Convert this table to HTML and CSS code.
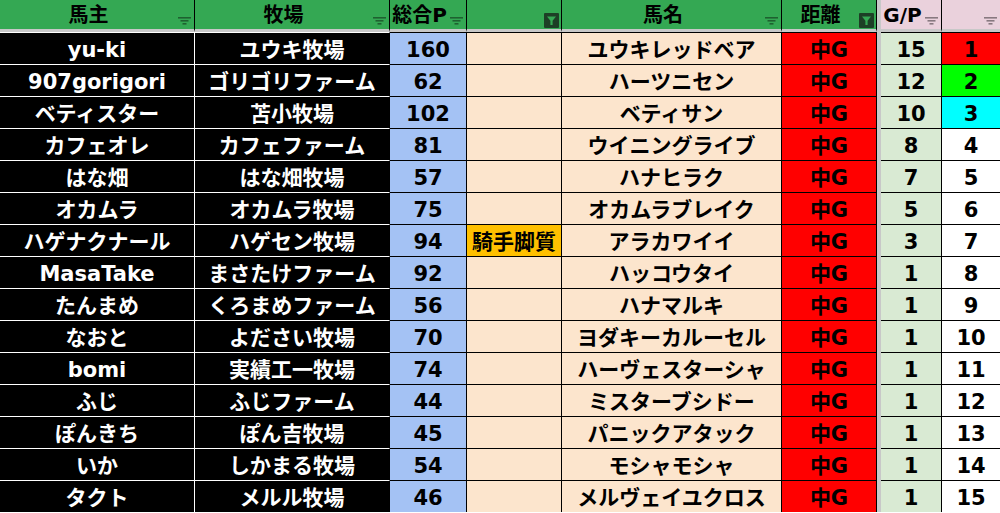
FILE: index.html
```html
<!DOCTYPE html>
<html lang="ja">
<head>
<meta charset="utf-8">
<title>馬主一覧</title>
<link rel="stylesheet" href="styles.css">
</head>
<body>
<div class="sheet">
  <div class="h"><span class="ht">馬主</span><span class="fb"><svg class="fi" width="13" height="8" viewBox="0 0 13 8"><rect x="0" y="0" width="13" height="1.6"/><rect x="2.5" y="3" width="8" height="1.6"/><rect x="4.5" y="6" width="4" height="1.6"/></svg></span></div>
  <div class="h"><span class="ht">牧場</span><span class="fb"><svg class="fi" width="13" height="8" viewBox="0 0 13 8"><rect x="0" y="0" width="13" height="1.6"/><rect x="2.5" y="3" width="8" height="1.6"/><rect x="4.5" y="6" width="4" height="1.6"/></svg></span></div>
  <div class="h"><span class="ht">総合P</span><span class="fb"><svg class="fi" width="13" height="8" viewBox="0 0 13 8"><rect x="0" y="0" width="13" height="1.6"/><rect x="2.5" y="3" width="8" height="1.6"/><rect x="4.5" y="6" width="4" height="1.6"/></svg></span></div>
  <div class="h"><span class="ht"></span><span class="fb"><svg class="fa" width="15" height="15" viewBox="0 0 15 15"><rect width="15" height="15" rx="1" fill="#1d3f26"/><path d="M3 3.5h9l-3.4 4.2v4.3h-2.2v-4.3z" fill="#35a853"/></svg></span></div>
  <div class="h"><span class="ht">馬名</span><span class="fb"><svg class="fi" width="13" height="8" viewBox="0 0 13 8"><rect x="0" y="0" width="13" height="1.6"/><rect x="2.5" y="3" width="8" height="1.6"/><rect x="4.5" y="6" width="4" height="1.6"/></svg></span></div>
  <div class="h"><span class="ht">距離</span><span class="fb"><svg class="fa" width="15" height="15" viewBox="0 0 15 15"><rect width="15" height="15" rx="1" fill="#1d3f26"/><path d="M3 3.5h9l-3.4 4.2v4.3h-2.2v-4.3z" fill="#35a853"/></svg></span></div>
  <div class="gap hgap"></div>
  <div class="h pink"><span class="ht">G/P</span><span class="fb"><svg class="fi" width="13" height="8" viewBox="0 0 13 8"><rect x="0" y="0" width="13" height="1.6"/><rect x="2.5" y="3" width="8" height="1.6"/><rect x="4.5" y="6" width="4" height="1.6"/></svg></span></div>
  <div class="h pink last"><span class="ht"></span><span class="fb"><svg class="fi" width="13" height="8" viewBox="0 0 13 8"><rect x="0" y="0" width="13" height="1.6"/><rect x="2.5" y="3" width="8" height="1.6"/><rect x="4.5" y="6" width="4" height="1.6"/></svg></span></div>

  <div class="c owner">yu-ki</div><div class="c farm">ユウキ牧場</div><div class="c pts">160</div><div class="c note"></div><div class="c horse">ユウキレッドベア</div><div class="c dist">中G</div><div class="gap"></div><div class="c gp">15</div><div class="c rank r1">1</div>
  <div class="c owner">907gorigori</div><div class="c farm">ゴリゴリファーム</div><div class="c pts">62</div><div class="c note"></div><div class="c horse">ハーツニセン</div><div class="c dist">中G</div><div class="gap"></div><div class="c gp">12</div><div class="c rank r2">2</div>
  <div class="c owner">ベティスター</div><div class="c farm">苫小牧場</div><div class="c pts">102</div><div class="c note"></div><div class="c horse">ベティサン</div><div class="c dist">中G</div><div class="gap"></div><div class="c gp">10</div><div class="c rank r3">3</div>
  <div class="c owner">カフェオレ</div><div class="c farm">カフェファーム</div><div class="c pts">81</div><div class="c note"></div><div class="c horse">ウイニングライブ</div><div class="c dist">中G</div><div class="gap"></div><div class="c gp">8</div><div class="c rank">4</div>
  <div class="c owner">はな畑</div><div class="c farm">はな畑牧場</div><div class="c pts">57</div><div class="c note"></div><div class="c horse">ハナヒラク</div><div class="c dist">中G</div><div class="gap"></div><div class="c gp">7</div><div class="c rank">5</div>
  <div class="c owner">オカムラ</div><div class="c farm">オカムラ牧場</div><div class="c pts">75</div><div class="c note"></div><div class="c horse">オカムラブレイク</div><div class="c dist">中G</div><div class="gap"></div><div class="c gp">5</div><div class="c rank">6</div>
  <div class="c owner">ハゲナクナール</div><div class="c farm">ハゲセン牧場</div><div class="c pts">94</div><div class="c note tag">騎手脚質</div><div class="c horse">アラカワイイ</div><div class="c dist">中G</div><div class="gap"></div><div class="c gp">3</div><div class="c rank">7</div>
  <div class="c owner">MasaTake</div><div class="c farm">まさたけファーム</div><div class="c pts">92</div><div class="c note"></div><div class="c horse">ハッコウタイ</div><div class="c dist">中G</div><div class="gap"></div><div class="c gp">1</div><div class="c rank">8</div>
  <div class="c owner">たんまめ</div><div class="c farm">くろまめファーム</div><div class="c pts">56</div><div class="c note"></div><div class="c horse">ハナマルキ</div><div class="c dist">中G</div><div class="gap"></div><div class="c gp">1</div><div class="c rank">9</div>
  <div class="c owner">なおと</div><div class="c farm">よださい牧場</div><div class="c pts">70</div><div class="c note"></div><div class="c horse">ヨダキーカルーセル</div><div class="c dist">中G</div><div class="gap"></div><div class="c gp">1</div><div class="c rank">10</div>
  <div class="c owner">bomi</div><div class="c farm">実績工一牧場</div><div class="c pts">74</div><div class="c note"></div><div class="c horse">ハーヴェスターシャ</div><div class="c dist">中G</div><div class="gap"></div><div class="c gp">1</div><div class="c rank">11</div>
  <div class="c owner">ふじ</div><div class="c farm">ふじファーム</div><div class="c pts">44</div><div class="c note"></div><div class="c horse">ミスターブシドー</div><div class="c dist">中G</div><div class="gap"></div><div class="c gp">1</div><div class="c rank">12</div>
  <div class="c owner">ぽんきち</div><div class="c farm">ぽん吉牧場</div><div class="c pts">45</div><div class="c note"></div><div class="c horse">パニックアタック</div><div class="c dist">中G</div><div class="gap"></div><div class="c gp">1</div><div class="c rank">13</div>
  <div class="c owner">いか</div><div class="c farm">しかまる牧場</div><div class="c pts">54</div><div class="c note"></div><div class="c horse">モシャモシャ</div><div class="c dist">中G</div><div class="gap"></div><div class="c gp">1</div><div class="c rank">14</div>
  <div class="c owner">タクト</div><div class="c farm">メルル牧場</div><div class="c pts">46</div><div class="c note"></div><div class="c horse">メルヴェイユクロス</div><div class="c dist">中G</div><div class="gap"></div><div class="c gp">1</div><div class="c rank">15</div>
</div>
</body>
</html>
```

FILE: styles.css
```css
* { box-sizing: border-box; }
html, body { margin: 0; padding: 0; background: #ffffff; }
body { overflow: hidden; }

.sheet {
  display: grid;
  grid-template-columns: 195px 195px 77px 95px 220px 95px 4px 61px 58px;
  grid-auto-rows: 32px;
  width: 1000px;
  font-family: "DejaVu Sans", "Noto Sans CJK JP", sans-serif;
  font-weight: bold;
  color: #000;
}

/* header */
.h {
  display: flex;
  align-items: center;
  background: #34a853;
  border-right: 1px solid #000;
  border-bottom: 3px solid #c8c8c8;
  font-size: 20px;
  line-height: 1;
}
.h.pink { background: #ead1dc; }
.h.last { border-right: none; }
.ht {
  flex: 1;
  text-align: center;
  white-space: nowrap;
  padding-top: 1px;
}
.fb {
  width: 17px;
  align-self: flex-end;
  display: flex;
  justify-content: flex-end;
  padding-right: 3px;
  padding-bottom: 4px;
}
.fi { display: block; fill: rgba(0, 0, 0, 0.42); }
.fa { display: block; margin-bottom: -3px; margin-right: -1px; }

.gap { background: #c8c8c8; }
.hgap { border-bottom: 3px solid #c8c8c8; }

/* body cells */
.c {
  display: flex;
  align-items: center;
  justify-content: center;
  border-top: 1px solid #000;
  border-right: 1px solid #000;
  font-size: 21px;
  line-height: 1;
  padding-top: 3px;
  white-space: nowrap;
}
.owner { background: #000; color: #fff; border-top-color: #fff; border-right-color: #fff; }
.farm { background: #000; color: #fff; border-top-color: #fff; }
.pts { background: #a4c2f4; }
.note { background: #fce5cd; }
.note.tag { background: #ffc000; }
.horse { background: #fce5cd; }
.dist { background: #ff0000; }
.gp { background: #d9ead3; }
.rank { background: #fff; border-right: none; }
.rank.r1 { background: #ff0000; }
.rank.r2 { background: #00ff00; }
.rank.r3 { background: #00ffff; }
```
